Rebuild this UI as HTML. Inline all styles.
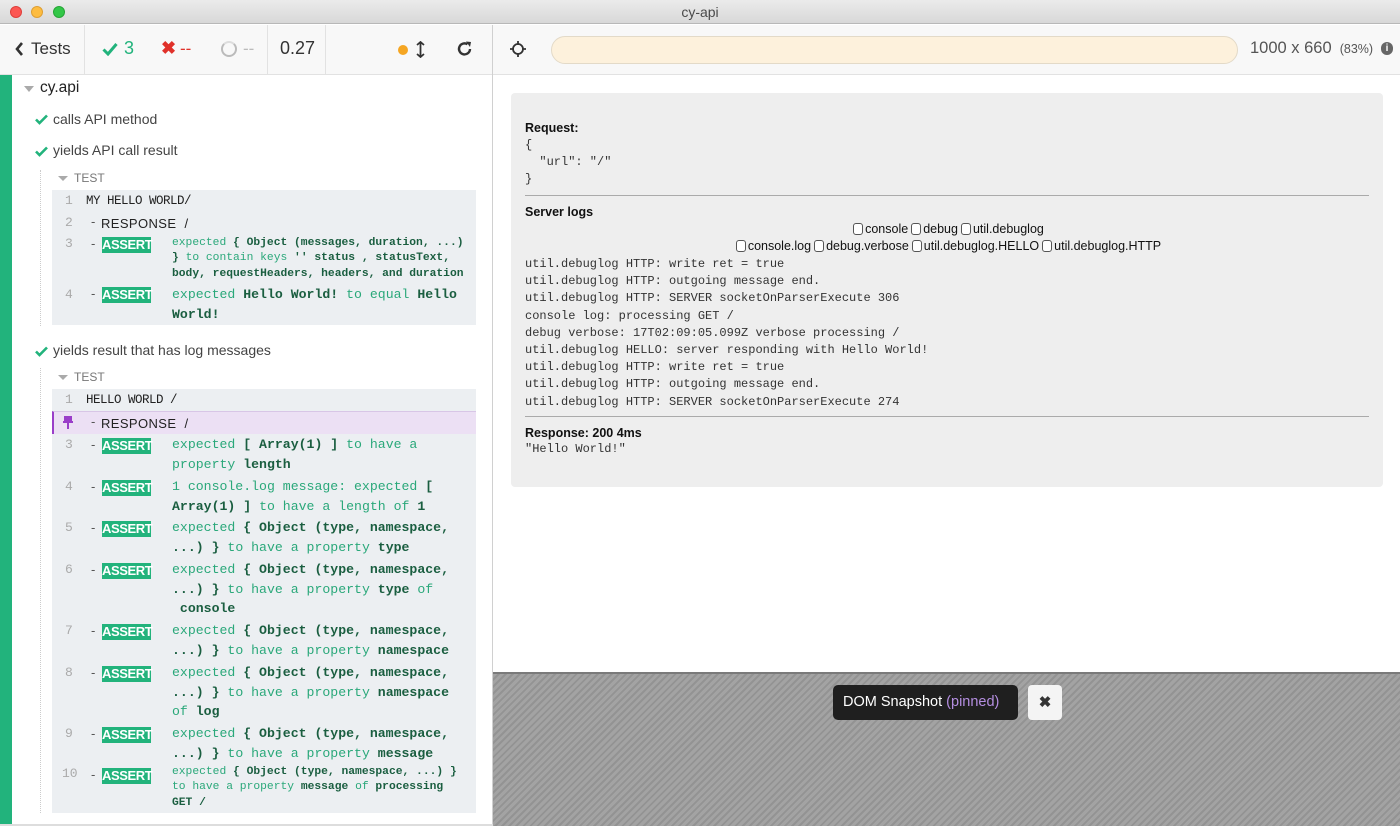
<!DOCTYPE html>
<html><head><meta charset="utf-8"><style>
*{margin:0;padding:0;box-sizing:border-box}
body{width:1400px;height:826px;overflow:hidden;position:relative;font-family:"Liberation Sans",sans-serif;background:#fff;color:#333}
.a{position:absolute;white-space:nowrap}
.m{font-family:"Liberation Mono",monospace}
.g{color:#2aa87a}
.d{color:#1a5e40;font-weight:bold}
.num{color:#aaa;font-family:"Liberation Mono",monospace;font-size:13px}
.badge{position:absolute;left:102px;width:49px;height:16px;background:#22b37c;color:#fff;font-family:"Liberation Sans",sans-serif;font-weight:bold;font-size:13px;line-height:16px;text-align:center;letter-spacing:-0.4px}
.dash{position:absolute;left:91px;color:#555;font-size:13px}
.logs div{height:17.2px}
.cb{display:inline-block;width:10px;height:12px;border:1px solid #555;border-radius:3px;background:#fff;vertical-align:-2px;margin:0 2px 0 3px}
</style></head><body>
<div class="a" style="left:0;top:0;width:1400px;height:24px;background:linear-gradient(#ebebeb,#d8d8d8);border-bottom:1px solid #b8b8b8"></div>
<div class="a" style="left:10px;top:6px;width:12px;height:12px;border-radius:50%;background:#fc5753;border:1px solid #de3f3b"></div>
<div class="a" style="left:31px;top:6px;width:12px;height:12px;border-radius:50%;background:#fdbc40;border:1px solid #de9f33"></div>
<div class="a" style="left:53px;top:6px;width:12px;height:12px;border-radius:50%;background:#33c748;border:1px solid #27a537"></div>
<div class="a" style="left:0;width:1400px;top:4px;text-align:center;font-size:14px;color:#4a4a4a">cy-api</div>

<div class="a" style="left:0;top:25px;width:493px;height:50px;background:#f8f8f8;border-bottom:1px solid #e2e2e2"></div>
<div class="a" style="left:84px;top:25px;width:1px;height:50px;background:#e2e2e2"></div>
<div class="a" style="left:267px;top:25px;width:1px;height:50px;background:#e2e2e2"></div>
<div class="a" style="left:325px;top:25px;width:1px;height:50px;background:#e2e2e2"></div>
<svg class="a" style="left:14px;top:41px" width="10" height="16"><path d="M8 2 L3 8 L8 14" stroke="#333" stroke-width="2.6" fill="none"/></svg>
<div class="a" style="left:31px;top:39px;font-size:17px;color:#333">Tests</div>
<svg class="a" style="left:102px;top:42px" width="16" height="14"><path d="M1.5 7.5 L6 12 L14.5 2" stroke="#22b37c" stroke-width="3" fill="none"/></svg>
<div class="a" style="left:124px;top:38px;font-size:18px;color:#22b37c">3</div>
<div class="a" style="left:161px;top:38px;font-size:18px;color:#e0312a;font-weight:bold">✖</div>
<div class="a" style="left:180px;top:39px;font-size:17px;color:#e0312a">--</div>
<div class="a" style="left:221px;top:41px;width:16px;height:16px;border-radius:50%;border:2px solid #bbb;border-top-color:#ddd"></div>
<div class="a" style="left:243px;top:39px;font-size:17px;color:#bbb">--</div>
<div class="a" style="left:280px;top:38px;font-size:18px;color:#333">0.27</div>
<div class="a" style="left:398px;top:45px;width:10px;height:10px;border-radius:50%;background:#f5a623"></div>
<svg class="a" style="left:416px;top:41px" width="9" height="17"><path d="M4.5 1 V16 M1 4 L4.5 1 L8 4 M1 13 L4.5 16 L8 13" stroke="#333" stroke-width="1.8" fill="none"/></svg>
<svg class="a" style="left:457px;top:41px" width="16" height="16"><path d="M13 8 A5.5 5.5 0 1 1 10.5 3.3" stroke="#333" stroke-width="2.4" fill="none"/><path d="M9 0.5 L14 1 L13 6 Z" fill="#333"/></svg>
<div class="a" style="left:492px;top:25px;width:1px;height:801px;background:#d0d0d0"></div>

<div class="a" style="left:0;top:75px;width:12px;height:751px;background:#22b37c"></div>
<div class="a" style="left:24px;top:86px;border-left:5px solid transparent;border-right:5px solid transparent;border-top:6px solid #aaa"></div>
<div class="a" style="left:40px;top:79px;font-size:15.5px;color:#222">cy.api</div>
<svg class="a" style="left:35px;top:114px" width="13" height="11"><path d="M1 5.5 L4.5 9 L12 1.5" stroke="#22b37c" stroke-width="2.6" fill="none"/></svg>
<div class="a" style="left:53px;top:111px;font-size:14px;color:#444">calls API method</div>
<svg class="a" style="left:35px;top:146px" width="13" height="11"><path d="M1 5.5 L4.5 9 L12 1.5" stroke="#22b37c" stroke-width="2.6" fill="none"/></svg>
<div class="a" style="left:53px;top:142px;font-size:14px;color:#444">yields API call result</div>

<div class="a" style="left:40px;top:170px;height:156px;border-left:1px dotted #ccc"></div>
<div class="a" style="left:58px;top:176px;border-left:5px solid transparent;border-right:5px solid transparent;border-top:5px solid #aaa"></div>
<div class="a" style="left:74px;top:171px;font-size:12px;color:#777">TEST</div>
<div class="a" style="left:52px;top:190px;width:424px;height:135px;background:#eceff2"></div>
<div class="a num" style="left:65px;top:193px">1</div>
<div class="a m" style="left:86px;top:194px;font-size:12.5px;color:#222;letter-spacing:-0.5px">MY HELLO WORLD/</div>
<div class="a num" style="left:65px;top:215px">2</div>
<div class="dash" style="top:214px">-</div>
<div class="a" style="left:101px;top:216px;font-size:13px;color:#222;letter-spacing:.4px">RESPONSE &nbsp;/</div>
<div class="a num" style="left:65px;top:236px">3</div>
<div class="dash" style="top:236px">-</div><div class="badge" style="top:237px">ASSERT</div>
<div class="a m" style="left:172px;top:236px;font-size:11.3px;line-height:15.3px"><span class="g">expected</span> <span class="d">{ Object (messages, duration, ...)</span><br><span class="d">}</span> <span class="g">to contain keys</span> <span class="d">'' status , statusText,</span><br><span class="d">body, requestHeaders, headers, and duration</span></div>
<div class="a num" style="left:65px;top:287px">4</div>
<div class="dash" style="top:286px">-</div><div class="badge" style="top:287px">ASSERT</div>
<div class="a m" style="left:172px;top:285px;font-size:13.2px;line-height:19.5px"><span class="g">expected</span> <span class="d">Hello World!</span> <span class="g">to equal</span> <span class="d">Hello</span><br><span class="d">World!</span></div>

<svg class="a" style="left:35px;top:346px" width="13" height="11"><path d="M1 5.5 L4.5 9 L12 1.5" stroke="#22b37c" stroke-width="2.6" fill="none"/></svg>
<div class="a" style="left:53px;top:342px;font-size:14px;color:#444">yields result that has log messages</div>
<div class="a" style="left:40px;top:368px;height:445px;border-left:1px dotted #ccc"></div>
<div class="a" style="left:58px;top:375px;border-left:5px solid transparent;border-right:5px solid transparent;border-top:5px solid #aaa"></div>
<div class="a" style="left:74px;top:370px;font-size:12px;color:#777">TEST</div>
<div class="a" style="left:52px;top:389px;width:424px;height:424px;background:#eceff2"></div>
<div class="a num" style="left:65px;top:392px">1</div>
<div class="a m" style="left:86px;top:393px;font-size:12.5px;color:#222;letter-spacing:-0.5px">HELLO WORLD /</div>
<div class="a" style="left:52px;top:411px;width:424px;height:23px;background:#ece0f4;border-left:2px solid #9a3ec9;border-top:1px solid #d8c6e6"></div>
<svg class="a" style="left:62px;top:416px" width="12" height="13"><path d="M2 1 H10 M3 1 V6 H9 V1 M1 6 H11 M6 6 V13" stroke="#9a3ec9" stroke-width="2" fill="#9a3ec9"/></svg>
<div class="dash" style="top:414px">-</div>
<div class="a" style="left:101px;top:416px;font-size:13px;color:#222;letter-spacing:.4px">RESPONSE &nbsp;/</div>

<div class="a num" style="left:65px;top:437px">3</div><div class="dash" style="top:437px">-</div><div class="badge" style="top:438px">ASSERT</div>
<div class="a m" style="left:172px;top:435px;font-size:13.2px;line-height:19.7px"><span class="g">expected</span> <span class="d">[ Array(1) ]</span> <span class="g">to have a</span><br><span class="g">property</span> <span class="d">length</span></div>
<div class="a num" style="left:65px;top:479px">4</div><div class="dash" style="top:479px">-</div><div class="badge" style="top:480px">ASSERT</div>
<div class="a m" style="left:172px;top:477px;font-size:13.2px;line-height:19.7px"><span class="g">1 console.log message: expected</span> <span class="d">[</span><br><span class="d">Array(1) ]</span> <span class="g">to have a length of</span> <span class="d">1</span></div>
<div class="a num" style="left:65px;top:520px">5</div><div class="dash" style="top:520px">-</div><div class="badge" style="top:521px">ASSERT</div>
<div class="a m" style="left:172px;top:518px;font-size:13.2px;line-height:19.7px"><span class="g">expected</span> <span class="d">{ Object (type, namespace,</span><br><span class="d">...) }</span> <span class="g">to have a property</span> <span class="d">type</span></div>
<div class="a num" style="left:65px;top:562px">6</div><div class="dash" style="top:562px">-</div><div class="badge" style="top:563px">ASSERT</div>
<div class="a m" style="left:172px;top:560px;font-size:13.2px;line-height:19.7px"><span class="g">expected</span> <span class="d">{ Object (type, namespace,</span><br><span class="d">...) }</span> <span class="g">to have a property</span> <span class="d">type</span> <span class="g">of</span><br><span class="d">&nbsp;console</span></div>
<div class="a num" style="left:65px;top:623px">7</div><div class="dash" style="top:623px">-</div><div class="badge" style="top:624px">ASSERT</div>
<div class="a m" style="left:172px;top:621px;font-size:13.2px;line-height:19.7px"><span class="g">expected</span> <span class="d">{ Object (type, namespace,</span><br><span class="d">...) }</span> <span class="g">to have a property</span> <span class="d">namespace</span></div>
<div class="a num" style="left:65px;top:665px">8</div><div class="dash" style="top:665px">-</div><div class="badge" style="top:666px">ASSERT</div>
<div class="a m" style="left:172px;top:663px;font-size:13.2px;line-height:19.7px"><span class="g">expected</span> <span class="d">{ Object (type, namespace,</span><br><span class="d">...) }</span> <span class="g">to have a property</span> <span class="d">namespace</span><br><span class="g">of</span> <span class="d">log</span></div>
<div class="a num" style="left:65px;top:726px">9</div><div class="dash" style="top:726px">-</div><div class="badge" style="top:727px">ASSERT</div>
<div class="a m" style="left:172px;top:724px;font-size:13.2px;line-height:19.7px"><span class="g">expected</span> <span class="d">{ Object (type, namespace,</span><br><span class="d">...) }</span> <span class="g">to have a property</span> <span class="d">message</span></div>
<div class="a num" style="left:62px;top:766px">10</div><div class="dash" style="top:767px">-</div><div class="badge" style="top:768px">ASSERT</div>
<div class="a m" style="left:172px;top:765px;font-size:11.3px;line-height:15.3px"><span class="g">expected</span> <span class="d">{ Object (type, namespace, ...) }</span><br><span class="g">to have a property</span> <span class="d">message</span> <span class="g">of</span> <span class="d">processing</span><br><span class="d">GET /</span></div>
<div class="a" style="left:0;top:824px;width:493px;height:2px;background:#ddd"></div>

<div class="a" style="left:493px;top:25px;width:907px;height:50px;background:#f8f8f8;border-bottom:1px solid #e2e2e2"></div>
<svg class="a" style="left:509px;top:40px" width="18" height="18"><circle cx="9" cy="9" r="5" stroke="#333" stroke-width="1.8" fill="none"/><path d="M9 1 V5 M9 13 V17 M1 9 H5 M13 9 H17" stroke="#333" stroke-width="1.8"/></svg>
<div class="a" style="left:551px;top:36px;width:687px;height:28px;border-radius:14px;background:#fdf1dc;border:1px solid #e3dac8"></div>
<div class="a" style="left:1250px;top:39px;font-size:16.5px;color:#555">1000 x 660 <span style="font-size:12.5px">&nbsp;(83%)</span></div>
<div class="a" style="left:1381px;top:42px;width:12px;height:13px;border-radius:6px;background:#666;color:#fff;font-size:10px;font-weight:bold;text-align:center;line-height:13px">i</div>

<div class="a" style="left:511px;top:93px;width:872px;height:394px;background:#eeeeee;border-radius:4px"></div>
<div class="a" style="left:525px;top:121px;font-size:12.5px;font-weight:bold;color:#111">Request:</div>
<div class="a m" style="left:525px;top:137px;font-size:12px;line-height:17.2px;color:#333;white-space:pre">{
  "url": "/"
}</div>
<div class="a" style="left:525px;top:195px;width:844px;height:1px;background:#aaa"></div>
<div class="a" style="left:525px;top:205px;font-size:12.5px;font-weight:bold;color:#111">Server logs</div>
<div class="a" style="left:511px;width:872px;top:222px;text-align:center;font-size:12.5px;color:#111"><span class="cb"></span>console<span class="cb"></span>debug<span class="cb"></span>util.debuglog</div>
<div class="a" style="left:511px;width:872px;top:239px;text-align:center;font-size:12.5px;color:#111"><span class="cb"></span>console.log<span class="cb"></span>debug.verbose<span class="cb"></span>util.debuglog.HELLO<span class="cb"></span>util.debuglog.HTTP</div>
<div class="a m logs" style="left:525px;top:256px;font-size:12px;line-height:17.2px;color:#333">
<div>util.debuglog HTTP: write ret = true</div>
<div>util.debuglog HTTP: outgoing message end.</div>
<div>util.debuglog HTTP: SERVER socketOnParserExecute 306</div>
<div>console log: processing GET /</div>
<div>debug verbose: 17T02:09:05.099Z verbose processing /</div>
<div>util.debuglog HELLO: server responding with Hello World!</div>
<div>util.debuglog HTTP: write ret = true</div>
<div>util.debuglog HTTP: outgoing message end.</div>
<div>util.debuglog HTTP: SERVER socketOnParserExecute 274</div>
</div>
<div class="a" style="left:525px;top:416px;width:844px;height:1px;background:#aaa"></div>
<div class="a" style="left:525px;top:426px;font-size:12.5px;font-weight:bold;color:#111">Response: 200 4ms</div>
<div class="a m" style="left:525px;top:442px;font-size:12px;color:#333">"Hello World!"</div>

<div class="a" style="left:493px;top:672px;width:907px;height:154px;background:repeating-linear-gradient(135deg,#a3a3a3 0 3px,#939393 3px 5px);border-top:2px solid #7a7a7a"></div>
<div class="a" style="left:833px;top:685px;width:185px;height:35px;background:#1f1f1f;border-radius:5px;color:#fff;font-size:14.5px;line-height:35px;padding-left:10px">DOM Snapshot <span style="color:#b48ee0">(pinned)</span></div>
<div class="a" style="left:1028px;top:685px;width:34px;height:35px;background:#f4f4f4;border-radius:4px;text-align:center;line-height:35px;font-size:15px;font-weight:bold;color:#333">✖</div>
</body></html>
